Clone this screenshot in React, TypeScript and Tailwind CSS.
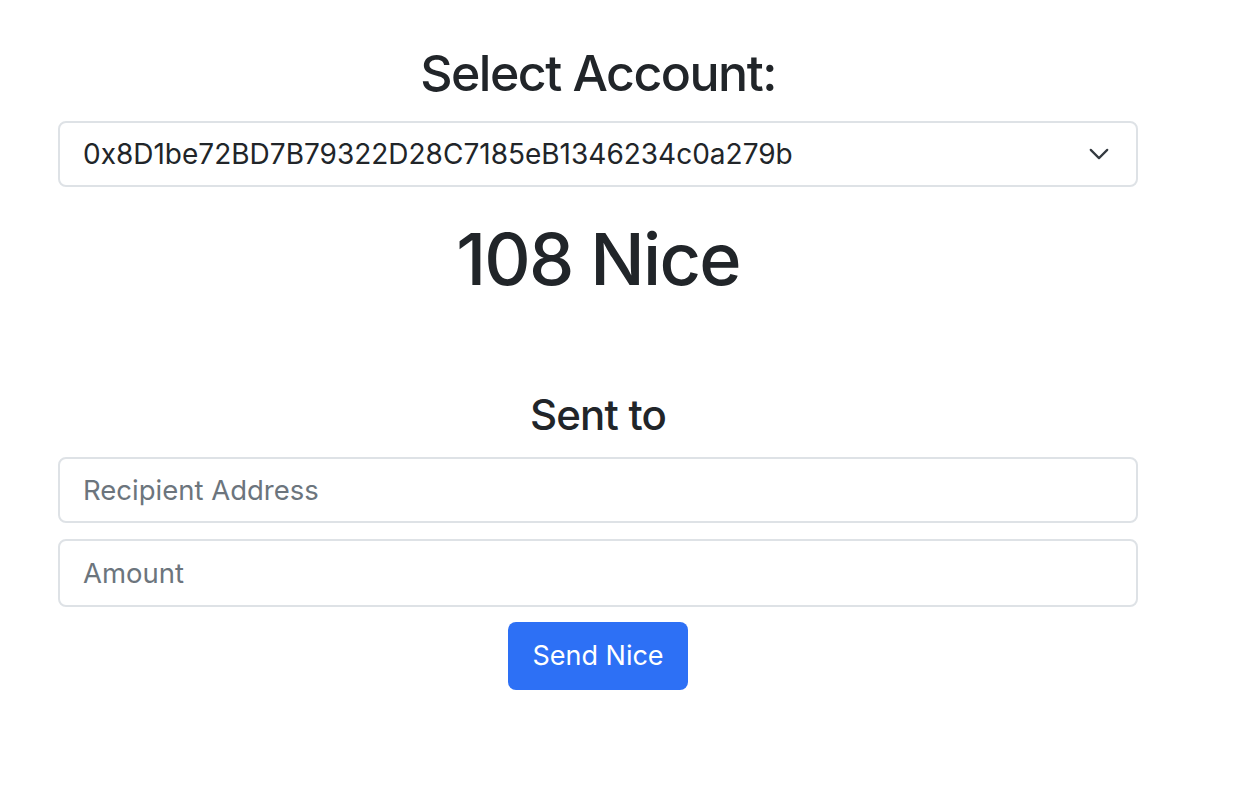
import React from 'react';

const font = { fontFamily: 'Inter, "Noto Sans", sans-serif' };

export default function App() {
  return (
    <div className="min-h-[800px] bg-white text-[#212529]" style={font}>
      <div className="ml-[58px] w-[1080px] flex flex-col items-center">
        <h1 className="mt-[48px] text-[50px] leading-none font-medium tracking-[-1.5px]">Select Account:</h1>
        <div className="mt-[23px] w-full h-[66px] border-2 border-[#dee2e6] rounded-[8px] flex items-center justify-between pl-[23px] pr-[26px]">
          <span className="text-[28px]">0x8D1be72BD7B79322D28C7185eB1346234c0a279b</span>
          <svg width="22" height="22" viewBox="0 0 16 16" fill="none" stroke="#343a40" strokeWidth="1.6" strokeLinecap="round" strokeLinejoin="round">
            <path d="m2 5 6 6 6-6" />
          </svg>
        </div>
        <div className="mt-[36px] text-[72px] leading-none font-medium tracking-[-1.7px]">108 Nice</div>
        <h2 className="mt-[99px] text-[42px] leading-none font-medium tracking-[-0.8px]">Sent to</h2>
        <input
          className="mt-[21px] w-full h-[66px] border-2 border-[#dee2e6] rounded-[8px] px-[23px] text-[27.5px] placeholder:text-[#6c757d] outline-none"
          placeholder="Recipient Address"
        />
        <input
          className="mt-[16px] w-full h-[68px] border-2 border-[#dee2e6] rounded-[8px] px-[23px] text-[27.5px] placeholder:text-[#6c757d] outline-none"
          placeholder="Amount"
        />
        <button className="mt-[15px] w-[180px] h-[68px] bg-[#2d70f5] rounded-[8px] text-white text-[27px]">
          Send Nice
        </button>
      </div>
    </div>
  );
}
